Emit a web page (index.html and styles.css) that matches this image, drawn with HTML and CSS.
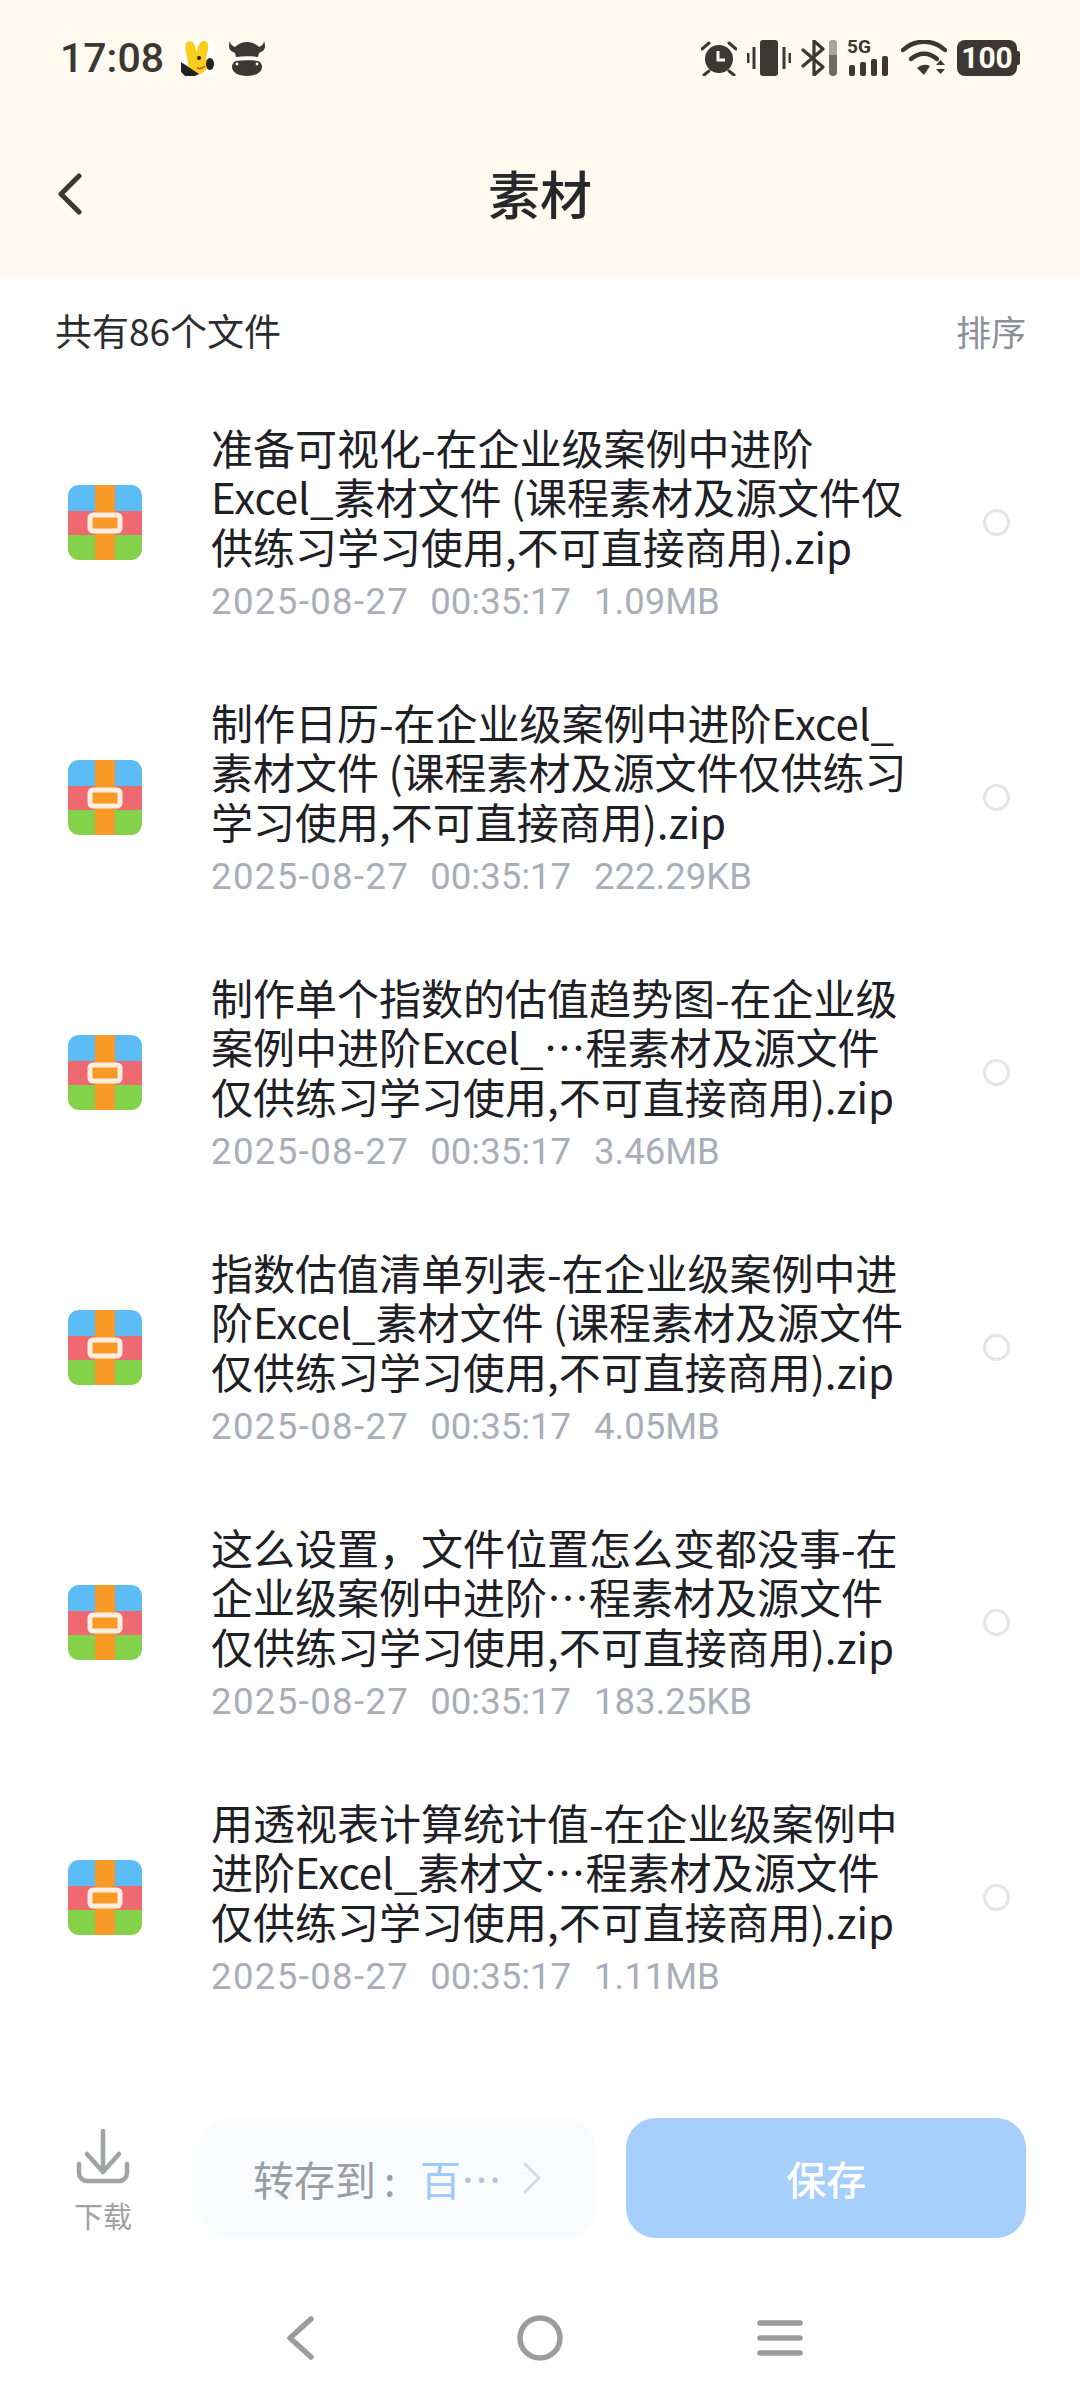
FILE: index.html

```html
<!DOCTYPE html>
<html lang="zh-CN">
<head>
  <meta charset="UTF-8">
  <meta name="viewport" content="width=device-width, initial-scale=1.0">
  <title>素材</title>
  <link rel="stylesheet" href="styles.css">
</head>
<body>
  <div class="page">
    <svg width="0" height="0" class="defs">
      <symbol id="zip" viewBox="0 0 74 75">
        <clipPath id="zipClip"><rect width="74" height="75" rx="11"/></clipPath>
        <g clip-path="url(#zipClip)">
          <rect width="74" height="26" fill="#5cbcf6"/>
          <rect y="26" width="74" height="24" fill="#ee6a70"/>
          <rect y="50" width="74" height="25" fill="#84d24a"/>
          <rect x="27" width="20" height="75" fill="#f99a26"/>
          <rect x="22" y="30" width="30" height="16" rx="3" fill="#f99a26" stroke="#fdeee2" stroke-width="5"/>
        </g>
      </symbol>
    </svg>

    <header class="top">
      <div class="status-bar">
        <div class="status-left">
          <span class="clock">17:08</span>
          <svg class="app-icon" width="34" height="36" viewBox="0 0 34 36">
            <rect width="34" height="36" rx="4" fill="#fff"/>
            <path d="M5 3c3-3 8-2 9 3l2 7c0-5 2-11 6-12 4-1 6 3 5 8l-2 9c3 3 3 8 0 12-3 4-9 6-14 4-3-2-4-8-4-12C6 16 3 8 5 3z" fill="#f6cf1f"/>
            <path d="M0 22l18 12-4 2H4l-4-4z" fill="#222"/>
            <ellipse cx="29" cy="24" rx="4" ry="6" fill="#222"/>
            <circle cx="18" cy="18" r="2" fill="#222"/>
            <path d="M16 28c3 1 6 0 8-2" stroke="#c9482a" stroke-width="1.500" fill="none"/>
          </svg>
          <svg class="app-icon" width="36" height="36" viewBox="0 0 36 36">
            <path d="M1 1c0 3 2 5 5 6 3-3 7-5 12-5s9 2 12 5c3-1 5-3 5-6 2 5 1 10-3 11l-2 1-1 4c-7-1-15-1-22 0l-1-4-2-1C0 11-1 6 1 1z" fill="#3b3833"/>
            <path d="M7 21c7-1 15-1 22 0 3 1 4 4 4 6 0 5-6 9-15 9S3 32 3 27c0-2 1-5 4-6z" fill="#3b3833"/>
            <circle cx="8" cy="24" r="1.400" fill="#fefaf0"/>
            <circle cx="28" cy="24" r="1.400" fill="#fefaf0"/>
          </svg>
        </div>
        <div class="status-right">
          <svg width="36" height="36" viewBox="0 0 36 36">
            <circle cx="18" cy="19" r="14" fill="#3b3833"/>
            <path d="M17 11v9h7" fill="none" stroke="#fefaf0" stroke-width="3"/>
            <path d="M1 9l7-6M35 9l-7-6M8 31l-5 4M28 31l5 4" stroke="#3b3833" stroke-width="3" stroke-linecap="round"/>
          </svg>
          <svg width="44" height="36" viewBox="0 0 44 36">
            <rect x="13" width="18" height="36" rx="3" fill="#3b3833"/>
            <path d="M1 13v10M7 7v22M37 7v22M43 13v10" stroke="#3b3833" stroke-width="3"/>
          </svg>
          <svg width="36" height="36" viewBox="0 0 36 36">
            <path d="M2 10l20 17-9 8V1l9 8L2 26" fill="none" stroke="#3b3833" stroke-width="3.200" stroke-linejoin="round" stroke-linecap="round"/>
            <rect x="28" width="8" height="36" rx="4" fill="#6e6b64"/>
            <path d="M28 4a4 4 0 0 1 8 0v11h-8z" fill="#a9a69d"/>
          </svg>
          <div class="signal">
            <span class="signal-label">5G</span>
            <svg width="42" height="20" viewBox="0 0 42 20">
              <rect x="2" y="9" width="6" height="11" rx="2" fill="#3b3833"/>
              <rect x="13" y="6" width="6" height="14" rx="2" fill="#3b3833"/>
              <rect x="24" y="3" width="6" height="17" rx="2" fill="#3b3833"/>
              <rect x="35" y="0" width="6" height="20" rx="2" fill="#3b3833"/>
            </svg>
          </div>
          <svg width="46" height="36" viewBox="0 0 46 36">
            <path d="M2 10c12-11 30-11 42 0" fill="none" stroke="#3b3833" stroke-width="4.400" stroke-linecap="round"/>
            <path d="M10 19c8-7 18-7 26 0" fill="none" stroke="#3b3833" stroke-width="4.400" stroke-linecap="round"/>
            <path d="M16 28c5-4 9-4 13-2l-6 9z" fill="#3b3833"/>
            <path d="M35 25l4.500-5 4.500 5zM35 29l4.500 5 4.500-5z" fill="#3b3833"/>
          </svg>
          <div class="battery">
            <span class="battery-body">100</span>
            <span class="battery-cap"></span>
          </div>
        </div>
      </div>
      <div class="title-bar">
        <svg class="back" width="26" height="42" viewBox="0 0 26 42">
          <path d="M22 3L4 21l18 18" fill="none" stroke="#3b3833" stroke-width="5" stroke-linecap="round" stroke-linejoin="round"/>
        </svg>
        <h1 class="title">素材</h1>
      </div>
    </header>

    <div class="summary">
      <span class="summary-count">共有86个文件</span>
      <span class="summary-sort">排序</span>
    </div>

    <ul class="file-list">
      <li class="file-row">
        <svg class="file-icon"><use href="#zip"/></svg>
        <div class="file-info">
          <div class="file-name">准备可视化-在企业级案例中进阶<br>Excel_素材文件 (课程素材及源文件仅<br>供练习学习使用,不可直接商用).zip</div>
          <div class="file-meta"><span class="meta-date">2025-08-27</span><span class="meta-time">00:35:17</span><span>1.09MB</span></div>
        </div>
        <span class="radio"></span>
      </li>
      <li class="file-row">
        <svg class="file-icon"><use href="#zip"/></svg>
        <div class="file-info">
          <div class="file-name">制作日历-在企业级案例中进阶Excel_<br>素材文件 (课程素材及源文件仅供练习<br>学习使用,不可直接商用).zip</div>
          <div class="file-meta"><span class="meta-date">2025-08-27</span><span class="meta-time">00:35:17</span><span>222.29KB</span></div>
        </div>
        <span class="radio"></span>
      </li>
      <li class="file-row">
        <svg class="file-icon"><use href="#zip"/></svg>
        <div class="file-info">
          <div class="file-name">制作单个指数的估值趋势图-在企业级<br>案例中进阶Excel_⋯程素材及源文件<br>仅供练习学习使用,不可直接商用).zip</div>
          <div class="file-meta"><span class="meta-date">2025-08-27</span><span class="meta-time">00:35:17</span><span>3.46MB</span></div>
        </div>
        <span class="radio"></span>
      </li>
      <li class="file-row">
        <svg class="file-icon"><use href="#zip"/></svg>
        <div class="file-info">
          <div class="file-name">指数估值清单列表-在企业级案例中进<br>阶Excel_素材文件 (课程素材及源文件<br>仅供练习学习使用,不可直接商用).zip</div>
          <div class="file-meta"><span class="meta-date">2025-08-27</span><span class="meta-time">00:35:17</span><span>4.05MB</span></div>
        </div>
        <span class="radio"></span>
      </li>
      <li class="file-row">
        <svg class="file-icon"><use href="#zip"/></svg>
        <div class="file-info">
          <div class="file-name">这么设置，文件位置怎么变都没事-在<br>企业级案例中进阶⋯程素材及源文件<br>仅供练习学习使用,不可直接商用).zip</div>
          <div class="file-meta"><span class="meta-date">2025-08-27</span><span class="meta-time">00:35:17</span><span>183.25KB</span></div>
        </div>
        <span class="radio"></span>
      </li>
      <li class="file-row">
        <svg class="file-icon"><use href="#zip"/></svg>
        <div class="file-info">
          <div class="file-name">用透视表计算统计值-在企业级案例中<br>进阶Excel_素材文⋯程素材及源文件<br>仅供练习学习使用,不可直接商用).zip</div>
          <div class="file-meta"><span class="meta-date">2025-08-27</span><span class="meta-time">00:35:17</span><span>1.11MB</span></div>
        </div>
        <span class="radio"></span>
      </li>
    </ul>

    <div class="actions">
      <div class="download">
        <svg width="56" height="56" viewBox="0 0 56 56">
          <path d="M28 3v41M12 26l16 18 16-18" fill="none" stroke="#a0a2a4" stroke-width="4.500" stroke-linecap="round" stroke-linejoin="round"/>
          <path d="M4 36v9a8 8 0 0 0 8 8h32a8 8 0 0 0 8-8v-9" fill="none" stroke="#a0a2a4" stroke-width="4.500" stroke-linecap="round"/>
        </svg>
        <span class="download-label">下载</span>
      </div>
      <div class="transfer">
        <span class="transfer-label">转存到<span class="transfer-colon">:</span></span>
        <span class="transfer-target">百</span>
        <span class="transfer-dots">⋯</span>
        <svg class="transfer-arrow" width="18" height="32" viewBox="0 0 18 32">
          <path d="M2 2l14 14L2 30" fill="none" stroke="#d8dbde" stroke-width="3" stroke-linecap="round" stroke-linejoin="round"/>
        </svg>
      </div>
      <button class="save-button">保存</button>
    </div>

    <nav class="nav-bar">
      <svg width="30" height="44" viewBox="0 0 30 44">
        <path d="M26 3L5 22l21 19" fill="none" stroke="#9c9c9c" stroke-width="5.500" stroke-linecap="round" stroke-linejoin="round"/>
      </svg>
      <svg width="46" height="46" viewBox="0 0 46 46">
        <circle cx="23" cy="23" r="20" fill="none" stroke="#9c9c9c" stroke-width="5.500"/>
      </svg>
      <svg width="46" height="38" viewBox="0 0 46 38">
        <path d="M3 4h40M3 19h40M3 34h40" stroke="#9c9c9c" stroke-width="5.500" stroke-linecap="round"/>
      </svg>
    </nav>
  </div>
</body>
</html>
```

FILE: styles.css

```css
* {
  box-sizing: border-box;
}

body {
  margin: 0;
  background: #fff;
  font-family: "Noto Sans CJK SC", "Noto Sans", sans-serif;
}

.defs {
  display: block;
  height: 0;
}

.page {
  width: 1080px;
  height: 2400px;
  display: flex;
  flex-direction: column;
  overflow: hidden;
}

.top {
  height: 277px;
  background: #fefaf0;
  flex-shrink: 0;
}

.status-bar {
  height: 116px;
  padding: 0 60px;
  display: flex;
  align-items: center;
  justify-content: space-between;
}

.status-left {
  display: flex;
  align-items: center;
  gap: 14px;
}

.clock {
  font-family: Roboto, "Noto Sans", sans-serif;
  font-size: 41px;
  font-weight: 500;
  color: #3b3833;
  margin-right: 3px;
}

.app-icon {
  display: block;
}

.status-right {
  display: flex;
  align-items: center;
  gap: 10px;
}

.status-right svg {
  display: block;
}

.signal {
  width: 44px;
  height: 36px;
  display: flex;
  flex-direction: column;
  justify-content: space-between;
}

.signal-label {
  font-family: Roboto, sans-serif;
  font-size: 19px;
  line-height: 14px;
  font-weight: 700;
  color: #3b3833;
}

.battery {
  display: flex;
  align-items: center;
}

.battery-body {
  width: 60px;
  height: 36px;
  border-radius: 8px;
  background: #3b3833;
  color: #fefaf0;
  font-family: Roboto, sans-serif;
  font-size: 30px;
  font-weight: 700;
  line-height: 36px;
  text-align: center;
}

.battery-cap {
  width: 3px;
  height: 14px;
  background: #3b3833;
  border-radius: 0 2px 2px 0;
}

.title-bar {
  height: 153px;
  position: relative;
  display: flex;
  align-items: center;
  justify-content: center;
}

.back {
  position: absolute;
  left: 57px;
  top: 57px;
}

.title {
  margin: 0;
  font-size: 52px;
  font-weight: 500;
  color: #26282b;
}

.summary {
  height: 106px;
  flex-shrink: 0;
  margin-bottom: 2px;
  padding: 0 54px 0 55px;
  display: flex;
  align-items: center;
  justify-content: space-between;
}

.summary-count {
  font-size: 37px;
  color: #2b2d30;
}

.summary-sort {
  font-size: 35px;
  color: #8d9096;
}

.file-list {
  list-style: none;
  margin: 0;
  padding: 0;
  flex: 1;
}

.file-row {
  height: 275px;
  padding: 0 30px 0 68px;
  display: flex;
  align-items: center;
}

.file-icon {
  width: 74px;
  height: 75px;
  flex-shrink: 0;
}

.file-info {
  width: 700px;
  margin-left: 69px;
  padding-top: 4px;
}

.file-name {
  font-size: 42px;
  line-height: 49.500px;
  color: #1e2025;
  white-space: nowrap;
}

.file-meta {
  margin-top: 7px;
  font-family: Roboto, "Noto Sans", sans-serif;
  font-size: 36.500px;
  line-height: 50px;
  color: #a9aeb8;
  display: flex;
  gap: 21px;
}

.meta-date {
  letter-spacing: 1.400px;
}

.meta-time {
  margin-right: 2px;
}

.radio {
  width: 27px;
  height: 27px;
  margin-left: 72px;
  border: 3px solid #e4e5e7;
  border-radius: 50%;
  flex-shrink: 0;
}

.actions {
  height: 172px;
  flex-shrink: 0;
  padding: 0 54px 22px 68px;
  display: flex;
  align-items: center;
}

.download {
  width: 70px;
  margin-top: 6px;
  display: flex;
  flex-direction: column;
  align-items: center;
  color: #a0a2a4;
}

.download svg {
  display: block;
}

.download-label {
  font-size: 29px;
  line-height: 38px;
  margin-top: 12px;
}

.transfer {
  width: 398px;
  height: 120px;
  margin-left: 61px;
  padding-left: 54px;
  background: #f9fbfd;
  border-radius: 30px;
  display: flex;
  align-items: center;
  font-size: 41px;
}

.transfer-label {
  color: #9a9ea3;
  width: 167px;
  white-space: nowrap;
}

.transfer-colon {
  margin-left: 8px;
}

.transfer-target {
  color: #9ecbf7;
}

.transfer-dots {
  color: #b8c4d6;
  width: 40px;
  text-align: center;
}

.transfer-arrow {
  margin-left: 22px;
}

.save-button {
  width: 400px;
  height: 120px;
  margin-left: 30px;
  border: none;
  border-radius: 30px;
  background: #a6cffb;
  color: #fff;
  font-family: inherit;
  font-size: 40px;
  font-weight: 500;
}

.nav-bar {
  height: 125px;
  flex-shrink: 0;
  display: grid;
  grid-template-columns: repeat(3, 240px);
  justify-content: center;
  justify-items: center;
  align-items: center;
}

.nav-bar svg {
  display: block;
}
```
